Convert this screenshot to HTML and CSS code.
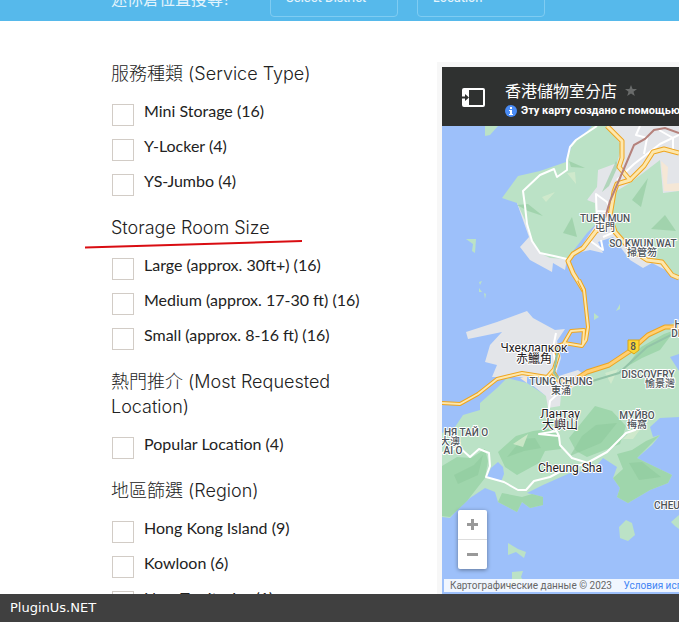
FILE: index.html
```
<!DOCTYPE HTML>
<html lang="zh-Hant">
	<head>
		<meta charset="utf-8" />
		<title>香港儲物室分店</title>
		<link rel="stylesheet" href="styles.css">
	</head>
	<body>
		<form class="search">
			<span class="search-title">迷你倉位置搜尋?</span>
			<button type="button" class="search-box">Select District</button>
			<button type="button" class="search-box">Location</button>
		</form>
		<div class="main">
			<form class="filters">
				<section>
					<h4>服務種類 (Service Type)</h4>
					<ul>
						<li><label><input type="checkbox"><span>Mini Storage (16)</span></label></li>
						<li><label><input type="checkbox"><span>Y-Locker (4)</span></label></li>
						<li><label><input type="checkbox"><span>YS-Jumbo (4)</span></label></li>
					</ul>
				</section>
				<section class="marked">
					<h4>Storage Room Size</h4>
					<svg class="underline" width="218" height="10" viewBox="0 0 218 10"><path d="M0 8.500L217 2" stroke="#d90d12" stroke-width="2"/></svg>
					<ul>
						<li><label><input type="checkbox"><span>Large (approx. 30ft+) (16)</span></label></li>
						<li><label><input type="checkbox"><span>Medium (approx. 17-30 ft) (16)</span></label></li>
						<li><label><input type="checkbox"><span>Small (approx. 8-16 ft) (16)</span></label></li>
					</ul>
				</section>
				<section>
					<h4>熱門推介 (Most Requested Location)</h4>
					<ul>
						<li><label><input type="checkbox"><span>Popular Location (4)</span></label></li>
					</ul>
				</section>
				<section>
					<h4>地區篩選 (Region)</h4>
					<ul>
						<li><label><input type="checkbox"><span>Hong Kong Island (9)</span></label></li>
						<li><label><input type="checkbox"><span>Kowloon (6)</span></label></li>
						<li><label><input type="checkbox"><span>New Territories (1)</span></label></li>
					</ul>
				</section>
			</form>
			<div class="map">
				<div class="map-head">
					<svg class="panel-icon" width="23" height="19" viewBox="0 0 23 19"><rect x="1" y="1" width="21" height="17" rx="1" fill="none" stroke="#fff" stroke-width="2"/><path d="M1 1h6v17H1z" fill="#fff"/><path d="M0 8.500h3V6l4 3.500L3 13v-2.500H0z" fill="#2f3130"/></svg>
					<div>
						<div class="map-title">香港儲物室分店
							<svg width="12" height="12" viewBox="0 0 12 12"><path d="M6 0l1.600 4H12L8.500 6.800 9.800 11 6 8.500 2.200 11l1.300-4.200L0 4h4.400z" fill="#696b6a"/></svg>
						</div>
						<div class="map-note">
							<svg width="12" height="12" viewBox="0 0 12 12"><circle cx="6" cy="6" r="6" fill="#4a8cf5"/><path d="M5 2h2v2H5zM4 5h3v4h1v1H4V9h1V6H4z" fill="#fff"/></svg>
							<span>Эту карту создано с помощью</span>
						</div>
					</div>
				</div>
				<div class="map-body">
					<svg class="map-svg" width="237" height="468" viewBox="0 0 237 468">
						<!-- land -->
						<g fill="#e3e5e9">
							<path d="M150 0H237V151L210 137 201 142 188 134 171 111 156 116 161 127 148 124 135 127 155 97 145 74 156 44z"/>
							<path d="M75 77H81L93 104 98 127 125 133 123 144 111 137 110 146 88 134 78 121 87 111z"/>
							<path d="M24 206L55 196 85 185 91 192 113 204 123 203 115 215 119 232 113 251 105 256 98 251H50L55 239 43 236 48 219 60 206 26 213z"/>
						</g>
						<g fill="#bbe2c6">
							<path d="M150 0C140 12 131 13 131 17L124 36 98 45 76 50 60 72 75 77 83 94 88 111 98 127 108 132 125 133 145 107 155 97 153 77 145 74 155 61 156 44 175 37 180 20 165 0z"/>
							<path d="M218 34L188 57 171 67 170 104 188 117 210 133 237 151V65L221 67z"/>
							<path d="M43 0H56L48 9 43 10zM24 113L34 113 33 127 30 125 31 118zM37 156l3-1-2 4zM37 162l3 4-3 0zM42 167l2 1-1 5zM152 187l5 4-5 3zM178 178l-4 7 4-2z"/>
							<path d="M0 307L13 301 21 289 38 284V277L55 262 65 252 85 257 103 269 110 257 121 249 138 251 168 241 188 226 208 211 231 197 237 200V228L228 231 237 245V291L218 292 208 301 211 311 218 309 210 319 195 332 205 337 230 349 226 357 208 364 186 377 175 371 178 362 171 352 175 341 161 332 151 344 128 347 101 359 85 367 101 371V379L88 382 80 376 75 386 56 376 53 366 43 362 28 372 15 384 8 392 0 391z"/>
							<path d="M184 394l6 3 3 12-7 6-8-3-1-11zM66 417l10 6 8 3-2 6-8-6-8 3zM70 446l11-1-2 6 2 3-9 6-13 4 11-9zM229 396l8-7v14l-4-3z"/>
						</g>
						<!-- hills -->
						<g fill="#9fd6ac">
							<path d="M0 340L15 331 29 332 43 323 46 335 43 352 25 375 8 391 0 390zM56 326L74 310 91 305 106 303 115 308 119 323 103 325 97 337 75 349 63 341zM127 312L153 280 170 285 184 300 178 318 163 324 145 331 134 325zM175 328L190 324 204 315 218 309 209 318 195 332 205 337 230 349 226 357 208 364 186 377 175 371 178 362 171 352 181 343z"/>
							<path d="M60 367l20 4 10-3 11 3v8l-13 3-8-6-5 10-19-10zM184 241l15-20 23-13 11-4-15 20-18 8z"/>
						</g>
						<g fill="#8fca9d" opacity=".6">
							<path d="M127 35l16 7-14-1zM75 79l11-1 15 12-15-5zM121 107l9-16 5 20zM160 66l14-31 2 5-9 20zM190 74l16-22-7 29zM209 103l14-14 11 16zM12 349l20-10 9-10-5 20-20 9zM65 331l15-18 13-1 6 10-17 3zM128 330l12-20 14-11 21-2-16 20zM187 337l13-1 19 15-22 3z"/>
						</g>
						<g fill="#d4ebcd" opacity=".8">
							<path d="M125 47l9 11-1-12zM100 71l13-5-9 10zM71 318l15-10-5 13zM163 247l13-4-7 15zM181 313l13-13 9-3-12 16z"/>
						</g>
						<path d="M219 35l7 6-1 17 12-1v8h-15zM78 252l7-2v7z" fill="#f5e7d6"/>
						<path d="M56 336L61 341 62 348 59 356 45 351 49 342z" fill="#9dc0fa"/>
						<path d="M89 258L106 254 120 249 136 244 146 252 119 269 118 280 106 282 104 270z" fill="#e3e5e9"/>
						<!-- small roads -->
						<g fill="none" stroke="#fff" stroke-width="2" stroke-linejoin="round">
							<path d="M155 0L134 14 128 21 125 34 125 44 115 51 112 43 98 49 81 65 83 80 85 98 90 115 98 127 112 130 125 133"/>
							<path d="M198 0l-4 9 11 3-3 16M175 54L192 38 218 18 237 9M217 4l14 8v14M155 100l-1-32 11 8 5 10-15-1M147 114l14 10-2-10M161 111l14-6"/>
							<path d="M0 327L17 321 28 331 37 323 47 327 48 340 44 351 62 356 76 364 84 364 92 355 108 351 121 344 145 337 165 326 171 320 184 307 193 304 200 297"/>
							<path d="M114 207l-3 15 3 22M119 265l-11 10-2 15M112 300L117 310 118 319 130 332 146 337M117 310l-20-2 18-3"/>
						</g>
						<!-- motorways -->
						<g fill="none" stroke="#efa51e" stroke-width="5" stroke-linejoin="round">
							<path d="M165 0L180 15V32L177 41 188 54 175 58 172 66 168 90 173 106 188 123 205 134 220 136 230 149 237 152"/>
							<path d="M188 54L202 40 211 26 222 23 237 27M165 99L154 105 141 122 131 128 126 135 131 147 142 165"/>
						</g>
						<g fill="none" stroke="#fde7ad" stroke-width="3" stroke-linejoin="round">
							<path d="M165 0L180 15V32L177 41 188 54 175 58 172 66 168 90 173 106 188 123 205 134 220 136 230 149 237 152"/>
							<path d="M188 54L202 40 211 26 222 23 237 27M165 99L154 105 141 122 131 128 126 135 131 147 142 165"/>
						</g>
						<g fill="none" stroke="#efa51e" stroke-width="4" stroke-linejoin="round">
							<path d="M137 154L142 164 146 201 144 214 140 220 122 217 129 205 142 204 141 218M0 277L18 278 36 268 55 253 80 247 105 251 112 243 116 230 112 221 122 218"/>
							<path d="M111 246L116 254 130 259M134 253L145 246 167 239 188 225 206 209 223 201H237" stroke-width="5"/>
						</g>
						<g fill="none" stroke="#fde7ad" stroke-width="2" stroke-linejoin="round">
							<path d="M137 154L142 164 146 201 144 214 140 220 122 217 129 205 142 204 141 218M0 277L18 278 36 268 55 253 80 247 105 251 112 243 116 230 112 221 122 218"/>
							<path d="M111 246L116 254 130 259M134 253L145 246 167 239 188 225 206 209 223 201H237" stroke="#ffcf73" stroke-width="3"/>
						</g>
						<path d="M237 7L223 2 212 4 203 13 192 19 181 45 168 75 163 92" fill="none" stroke="#b5827c" stroke-width="2"/>
						<path d="M116 222l-4 25 8 10M137 259l40-12 28-26 32-16" fill="none" stroke="#93c4a8" stroke-width="2"/>
						<path d="M186 214h11v10l-5 4-6-4z" fill="#fcd535" stroke="#d9a514"/>
						<!-- place names -->
						<g class="area">
							<text x="163" y="96">TUEN MUN</text>
							<text x="163" y="105">屯門</text>
							<text x="201" y="121">SO KWUN WAT</text>
							<text x="200" y="130">掃管笏</text>
							<text x="119" y="259">TUNG CHUNG</text>
							<text x="119" y="268">東涌</text>
							<text x="206" y="252">DISCOVERY</text>
							<text x="218" y="261">愉景灣</text>
							<text x="195" y="293">МУЙВО</text>
							<text x="195" y="302">梅窩</text>
							<text x="24" y="310">НЯ ТАЙ О</text>
							<text x="8" y="319">大澳</text>
							<text x="11" y="328">AI O</text>
							<text x="191" y="224" class="shield">8</text>
							<text x="236" y="202">H</text>
							<text x="234" y="211">DI</text>
							<text x="225" y="383">CHEU</text>
						</g>
						<g class="town">
							<text x="92" y="226">Чхеклапкок</text>
							<text x="92" y="237">赤鱲角</text>
							<text x="118" y="292">Лантау</text>
							<text x="118" y="303">大嶼山</text>
							<text x="128" y="346">Cheung Sha</text>
						</g>
					</svg>
					<div class="zoom">
						<button type="button" aria-label="Zoom in"><svg width="11" height="11" viewBox="0 0 11 11"><path d="M4 0h3v4h4v3H7v4H4V7H0V4h4z" fill="#999"/></svg></button>
						<button type="button" aria-label="Zoom out"><svg width="11" height="11" viewBox="0 0 11 11"><path d="M0 4h11v3H0z" fill="#999"/></svg></button>
					</div>
					<div class="credits">
						<span>Картографические данные © 2023</span>
						<a href="#">Условия использования</a>
					</div>
				</div>
			</div>
		</div>
		<footer class="bar">PluginUs.NET</footer>
	</body>
</html>
```
FILE: styles.css
```
*{box-sizing:border-box;}
body{
	margin:0;
	height:100vh;
	overflow:hidden;
	background:#fff;
	color:#222;
	font-family:Lato, "Noto Sans CJK TC", sans-serif;
	font-size:16px;
}
ul,li{margin:0;padding:0;list-style:none;}

.search{
	display:flex;
	align-items:flex-end;
	height:21px;
	padding:0 0 4px 111px;
	overflow:hidden;
	background:#56b9eb;
	color:#e4f4fc;
}
.search-title{
	width:159px;
	line-height:24px;
	padding-bottom:6px;
	white-space:nowrap;
}
.search-box{
	width:128px;
	height:38px;
	margin-right:19px;
	padding:0 15px;
	border:1px solid #7fccf2;
	border-radius:4px;
	background:none;
	color:#e4f4fc;
	font:500 12px/16px Inter, sans-serif;
	text-align:left;
	flex:none;
}

.main{
	display:flex;
	align-items:flex-start;
	padding-left:111px;
}
.filters{
	width:271px;
	margin-right:55px;
	padding-top:40px;
	flex:none;
}
.filters section{
	position:relative;
	margin-bottom:8px;
}
.filters h4{
	margin:0 0 16px;
	color:#222;
	font:300 18px/25px Inter, "Noto Sans CJK TC", sans-serif;
}
.filters li{
	height:35px;
}
.filters label{
	display:flex;
	align-items:flex-start;
	line-height:18px;
}
.filters input{
	appearance:none;
	width:22px;
	height:22px;
	margin:2px 10px 0 1px;
	border:1px solid #d2ccc6;
	background:#fff;
	flex:none;
}
.underline{
	position:absolute;
	left:-26px;
	top:24px;
}

.map{
	flex:1;
	min-width:0;
	margin-top:41px;
	border-left:5px solid #f7f7f7;
	border-top:5px solid #f7f7f7;
	font-family:Roboto, "Noto Sans CJK TC", sans-serif;
}
.map-head{
	display:flex;
	height:59px;
	padding:14px 0 0 20px;
	overflow:hidden;
	background:#2f3130;
	color:#fff;
	white-space:nowrap;
}
.panel-icon{
	margin:7px 20px 0 0;
	flex:none;
}
.map-title{
	font-size:16px;
	line-height:22px;
}
.map-title svg{
	margin-left:4px;
}
.map-note{
	display:flex;
	align-items:center;
	gap:4px;
	font-size:11px;
	font-weight:700;
	line-height:16px;
}
.map-body{
	position:relative;
	height:468px;
	overflow:hidden;
	background:#9dc0fa;
}
.map-svg{
	display:block;
}
.map-svg text{
	text-anchor:middle;
	paint-order:stroke;
	stroke:#fff;
	stroke-width:2px;
	stroke-linejoin:round;
}
.area{
	fill:#4d5359;
	font-size:10px;
	font-weight:500;
}
.area .shield{
	stroke:none;
}
.town{
	fill:#1f2124;
	font-size:12px;
}
.zoom{
	position:absolute;
	left:16px;
	bottom:25px;
	width:29px;
	border-radius:2px;
	background:#fff;
	box-shadow:0 1px 4px rgba(0,0,0,.4);
}
.zoom button{
	display:flex;
	align-items:center;
	justify-content:center;
	width:29px;
	height:29px;
	padding:0;
	border:0;
	background:none;
}
.zoom button + button{
	height:30px;
	border-top:1px solid #ddd;
}
.credits{
	position:absolute;
	left:2px;
	right:0;
	bottom:2px;
	padding-left:6px;
	overflow:hidden;
	background:rgba(255,255,255,.85);
	color:#666;
	font-size:10px;
	line-height:13px;
	white-space:nowrap;
}
.credits a{
	margin-left:9px;
	color:#4285f4;
	text-decoration:none;
}

.bar{
	position:fixed;
	left:0;
	right:0;
	bottom:0;
	height:28px;
	padding-left:10px;
	background:#404040;
	color:#fff;
	font:13px/27px "DejaVu Sans", sans-serif;
}
```
